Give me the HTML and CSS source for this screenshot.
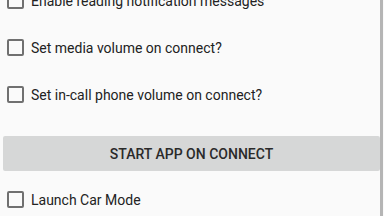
FILE: index.html
```html
<!DOCTYPE html>
<html lang="en">

<head>
    <meta charset="UTF-8">
    <meta name="viewport" content="width=device-width, initial-scale=1.0">
    <title>Settings</title>
    <link rel="stylesheet" href="styles.css">
</head>

<body>
    <div id="screen">
        <div id="settings">
            <label class="row">
                <span class="box"></span>
                <span class="rowText">Enable reading notification messages</span>
            </label>
            <label class="row">
                <span class="box"></span>
                <span class="rowText">Set media volume on connect?</span>
            </label>
            <label class="row">
                <span class="box"></span>
                <span class="rowText">Set in-call phone volume on connect?</span>
            </label>
            <div class="btnWrap">
                <button class="wideBtn">START APP ON CONNECT</button>
            </div>
            <label class="row">
                <span class="box"></span>
                <span class="rowText">Launch Car Mode</span>
            </label>
        </div>
        <div id="scrollbar"></div>
    </div>
</body>

</html>
```

FILE: styles.css
```css
body {
    margin: 0;
    padding: 0;
    background-color: #fafafa;
    font-family: Roboto, 'Noto Sans', sans-serif;
    overflow: hidden;
}

#screen {
    height: 216px;
    display: flex;
    overflow: hidden;
}

#settings {
    flex: 1;
    margin-top: -23px;
    display: flex;
    flex-direction: column;
}

#scrollbar {
    width: 3px;
    margin-right: 1px;
    background-color: #b5b5b5;
}

.row {
    height: 47px;
    flex-shrink: 0;
    display: flex;
    align-items: center;
    padding-left: 7px;
}

.box {
    width: 13px;
    height: 13px;
    border: 2px solid #707070;
    border-radius: 2px;
    margin-right: 7px;
}

.rowText {
    font-size: 14px;
    color: #222;
}

.btnWrap {
    padding: 18px 0 0 3px;
}

.wideBtn {
    width: 100%;
    height: 35px;
    border: none;
    border-radius: 2px;
    background-color: #d6d7d7;
    color: #2a2a2a;
    font-family: Roboto, 'Noto Sans', sans-serif;
    font-size: 14px;
    font-weight: 500;
    margin-bottom: 5px;
}
```
